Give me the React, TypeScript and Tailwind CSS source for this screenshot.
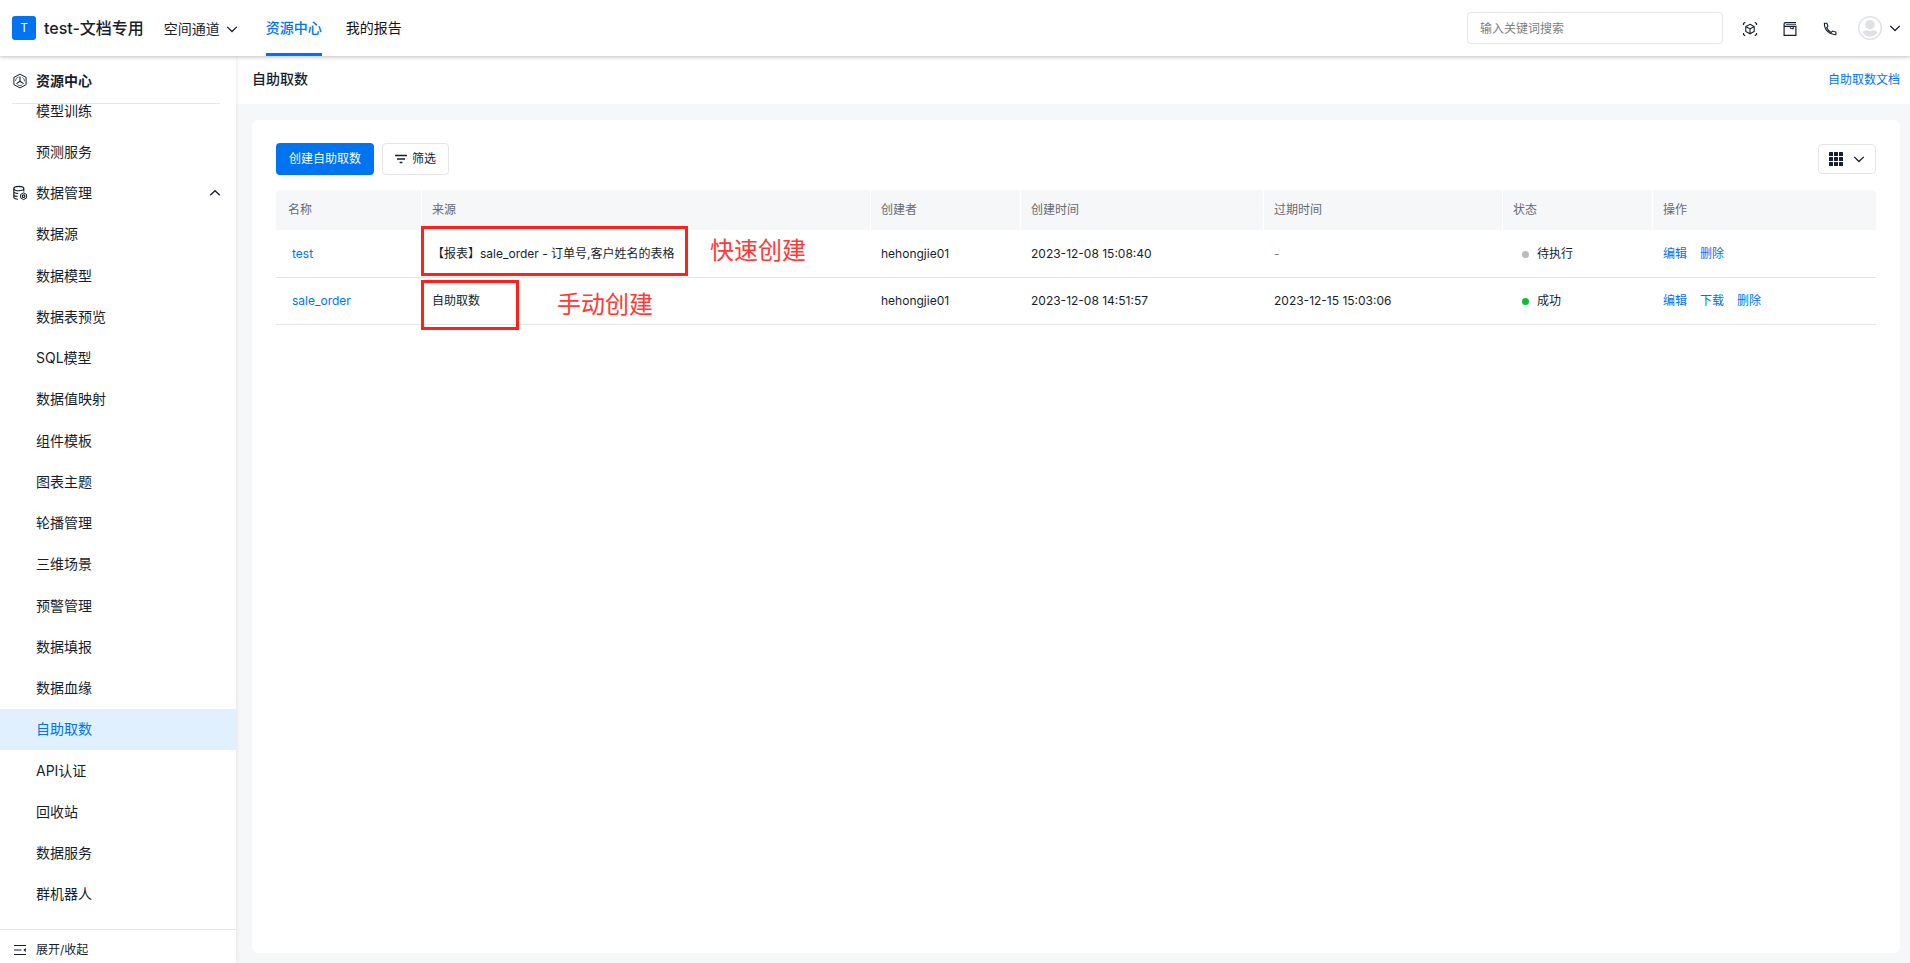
import type { ReactNode } from 'react'
import clsx from 'clsx'

interface MenuItem {
  label: string
  active?: boolean
  group?: boolean
}

interface TaskRow {
  name: string
  source: string
  creator: string
  createdAt: string
  expiresAt: string | null
  status: 'pending' | 'success'
  actions: string[]
}

const menuItems: MenuItem[] = [
  { label: '模型训练' },
  { label: '预测服务' },
  { label: '数据管理', group: true },
  { label: '数据源' },
  { label: '数据模型' },
  { label: '数据表预览' },
  { label: 'SQL模型' },
  { label: '数据值映射' },
  { label: '组件模板' },
  { label: '图表主题' },
  { label: '轮播管理' },
  { label: '三维场景' },
  { label: '预警管理' },
  { label: '数据填报' },
  { label: '数据血缘' },
  { label: '自助取数', active: true },
  { label: 'API认证' },
  { label: '回收站' },
  { label: '数据服务' },
  { label: '群机器人' },
]

const columns = [
  { title: '名称', className: 'w-[146px] pl-3 rounded-tl' },
  { title: '来源', className: 'w-[449px] pl-2.5' },
  { title: '创建者', className: 'w-[150px] pl-2.5' },
  { title: '创建时间', className: 'w-[243px] pl-2.5' },
  { title: '过期时间', className: 'w-[239px] pl-2.5' },
  { title: '状态', className: 'w-[150px] pl-2.5' },
  { title: '操作', className: 'pl-2.5 rounded-tr' },
]

const rows: TaskRow[] = [
  {
    name: 'test',
    source: '【报表】sale_order - 订单号,客户姓名的表格',
    creator: 'hehongjie01',
    createdAt: '2023-12-08 15:08:40',
    expiresAt: null,
    status: 'pending',
    actions: ['编辑', '删除'],
  },
  {
    name: 'sale_order',
    source: '自助取数',
    creator: 'hehongjie01',
    createdAt: '2023-12-08 14:51:57',
    expiresAt: '2023-12-15 15:03:06',
    status: 'success',
    actions: ['编辑', '下载', '删除'],
  },
]

function Icon({ size = 16, children }: { size?: number; children: ReactNode }) {
  return (
    <svg
      width={size}
      height={size}
      viewBox={`0 0 ${size} ${size}`}
      fill="none"
      stroke="currentColor"
      strokeWidth="1.2"
      className="shrink-0"
      aria-hidden="true"
    >
      {children}
    </svg>
  )
}

function Chevron({ up = false }: { up?: boolean }) {
  return (
    <Icon size={12}>
      <path d={up ? 'M1.2 8.3 6 3.7l4.8 4.6' : 'M1.2 3.9 6 8.5l4.8-4.6'} strokeWidth="1.3" />
    </Icon>
  )
}

function HexIcon() {
  return (
    <Icon>
      <path d="M8 1.1 14.1 4.400v7.200L8 14.900 1.900 11.600V4.400z" strokeWidth="1" />
      <circle cx="8" cy="8" r="4.500" strokeWidth="0.700" strokeDasharray="5.400 4.020" strokeDashoffset="-4.400" />
      <path d="M8 3.600v4.600M8 8.200l-3.600 2.400M8 8.200l3.600 2.400" strokeWidth="1.100" />
    </Icon>
  )
}

function DatabaseIcon() {
  return (
    <Icon>
      <ellipse cx="6.8" cy="3.6" rx="5" ry="2.2" strokeWidth="1.1" />
      <path d="M1.8 3.600v8.600c0 1 1.600 1.900 4.200 2.100M1.800 6.500c0 1 1.600 1.800 4.400 2M1.800 9.400c0 1 1.500 1.800 3.600 2M11.800 3.600v2.800" strokeWidth="1.100" />
      <path d="m11.600 7.800 3 1.700v3.400l-3 1.700-3-1.700V9.500z" strokeWidth="1" />
      <circle cx="11.600" cy="11.200" r="1.300" />
    </Icon>
  )
}

function ScanCubeIcon() {
  return (
    <Icon>
      <path d="M8 3.300 12.200 5.600v4.900L8 12.800 3.800 10.500V5.600zM3.800 5.600 8 7.900l4.200-2.300M8 7.900v4.900" strokeWidth="1.100" />
      <path d="M1.500 4V2.500L3.200 1.300M12.800 1.300l1.700 1.200V4M1.500 12v1.500l1.700 1.200M12.800 14.700l1.700-1.200V12" />
    </Icon>
  )
}

function ManualIcon() {
  return (
    <Icon>
      <path d="M14 1.600H3.600c-.9 0-1.500.5-1.500 1.300v11.500h11.800V5.300H3.600c-.9 0-1.500-.5-1.500-1.300" />
      <path d="M4 3.500h10" strokeWidth="0.700" />
      <path d="M8.400 5.300v2.200h3V5.300M10.900 6.500v2" strokeWidth="0.900" />
    </Icon>
  )
}

function PhoneIcon() {
  return (
    <Icon>
      <path d="M2.400 2.200h2.500l1 3.200-1.200 1.300c.9 2.100 2.500 3.700 4.600 4.700l1.400-1.300 3.200 1v2.600C7.800 14.100 2.200 9.100 2.400 2.200z" strokeWidth="1.100" />
    </Icon>
  )
}

function FilterIcon() {
  return (
    <Icon size={12}>
      <path d="M0 2.500h12M2 6h8M4.600 9.500h2.800" strokeWidth="1.300" />
    </Icon>
  )
}

function CollapseIcon() {
  return (
    <Icon size={12}>
      <path d="M0 1.500h12M0 6h7.500M0 10.500h12" />
      <path d="m11.800 4.100-2.500 1.900 2.500 1.900z" fill="currentColor" stroke="none" />
    </Icon>
  )
}

function GridIcon() {
  const cells = [0, 5, 10]
  return (
    <Icon size={14}>
      {cells.map((y) =>
        cells.map((x) => (
          <rect key={`${x}-${y}`} x={x} y={y} width="4" height="4" rx="0.5" fill="currentColor" stroke="none" />
        )),
      )}
    </Icon>
  )
}

function Avatar() {
  return (
    <svg width="24" height="24" viewBox="0 0 24 24" className="shrink-0" aria-hidden="true">
      <circle cx="12" cy="12" r="11.300" fill="#fff" stroke="#dfe1e5" strokeWidth="1.400" />
      <circle cx="12" cy="8.700" r="4.800" fill="#dfe1e5" />
      <path d="M4.500 16.200c1.200-1.300 3.100-1.900 4.700-1.900 1.700 1.100 3.900 1.100 5.600 0 1.600 0 3.500.6 4.700 1.900-1.400 2.700-4.200 4.500-7.500 4.500s-6.100-1.800-7.500-4.500z" fill="#dfe1e5" />
    </svg>
  )
}

function TopBar() {
  return (
    <header className="relative z-20 flex h-14 shrink-0 items-center bg-white pr-[9px] pl-3 shadow-[0_1px_4px_rgba(0,0,0,0.25)]">
      <span className="flex h-6 w-6 items-center justify-center rounded-[3px] bg-[#0073f0] text-xs text-white">T</span>
      <span className="ml-2 text-base font-medium">test-文档专用</span>
      <nav className="ml-5 flex h-full items-center text-sm">
        <button className="mr-7 flex items-center gap-1.5 pt-0.5">
          空间通道
          <Chevron />
        </button>
        <a href="#" className="mr-6 flex h-full items-center border-b-3 border-[#0073f0] pt-0.5 font-medium text-[#0073f0]">
          资源中心
        </a>
        <a href="#" className="flex h-full items-center text-[#111]">我的报告</a>
      </nav>
      <input
        type="search"
        aria-label="搜索"
        placeholder="输入关键词搜索"
        className="mr-[19px] ml-auto h-8 w-64 rounded border border-[#e5e6e8] px-3 text-xs placeholder-[#7c7e82] outline-none"
      />
      <div className="flex items-center gap-6 pt-0.5">
        <button aria-label="三维"><ScanCubeIcon /></button>
        <button aria-label="文档"><ManualIcon /></button>
        <button aria-label="电话"><PhoneIcon /></button>
      </div>
      <button aria-label="用户" className="ml-5 flex items-center gap-[7px]">
        <Avatar />
        <Chevron />
      </button>
    </header>
  )
}

function Sidebar() {
  return (
    <aside className="relative z-10 flex w-[236px] shrink-0 flex-col bg-white shadow-[0_0_5px_rgba(0,0,0,0.1)]">
      <div className="mr-4 ml-3 flex h-12 shrink-0 items-center gap-2 border-b border-[#e5e6e8] pt-0.5 text-sm font-semibold">
        <HexIcon />
        资源中心
      </div>
      {/* The list is scrolled a little, so its first entry sits close under the title */}
      <nav className="flex min-h-0 flex-1 flex-col overflow-hidden pb-3.5 text-sm leading-none">
        <ul className="-mt-3.5 flex flex-1 flex-col">
          {menuItems.map((item) => (
            <li key={item.label} className="flex-1">
              <a
                href="#"
                className={clsx(
                  'flex h-full items-center gap-2 pr-[15px] pl-3',
                  item.active && 'bg-[#e1f0ff] text-[#0073f0]',
                )}
              >
                {item.group ? <DatabaseIcon /> : <span className="w-4" />}
                {item.label}
                {item.group && (
                  <span className="ml-auto">
                    <Chevron up />
                  </span>
                )}
              </a>
            </li>
          ))}
        </ul>
      </nav>
      <button className="flex shrink-0 items-center gap-2.5 border-t border-[#e5e6e8] pt-3 pb-[5px] pl-3.5 text-xs">
        <CollapseIcon />
        展开/收起
      </button>
    </aside>
  )
}

function Status({ status }: { status: TaskRow['status'] }) {
  return (
    <span className="flex items-center gap-2 pl-[9px]">
      <span className={clsx('h-[7px] w-[7px] rounded-full', status === 'success' ? 'bg-[#0bbd35]' : 'bg-[#b9bbbf]')} />
      {status === 'success' ? '成功' : '待执行'}
    </span>
  )
}

function TaskTable() {
  return (
    <table className="w-full table-fixed border-separate border-spacing-0 text-left text-xs">
      <thead>
        <tr className="h-[41px] text-[#666a73]">
          {columns.map((col) => (
            <th
              key={col.title}
              className={clsx(
                'border-r border-b border-white bg-[#f6f7f9] bg-clip-padding p-0 font-normal last:border-r-0',
                col.className,
              )}
            >
              {col.title}
            </th>
          ))}
        </tr>
      </thead>
      <tbody>
        {rows.map((row) => (
          <tr key={row.name} className="h-[47px] *:border-b *:border-[#e5e6e8] *:pl-2.5">
            <td>
              <a href="#" className="ml-1.5 text-[#0073f0]">{row.name}</a>
            </td>
            <td>{row.source}</td>
            <td>{row.creator}</td>
            <td>{row.createdAt}</td>
            <td>{row.expiresAt ?? <span className="text-[#7c7e82]">-</span>}</td>
            <td>
              <Status status={row.status} />
            </td>
            <td>
              <span className="flex gap-[13px] text-[#0073f0]">
                {row.actions.map((action) => (
                  <a key={action} href="#">{action}</a>
                ))}
              </span>
            </td>
          </tr>
        ))}
      </tbody>
    </table>
  )
}

export default function App() {
  return (
    <div className="flex h-screen flex-col overflow-hidden bg-[#f6f7f9] font-['Inter','Noto_Sans_CJK_SC',sans-serif] text-[#171e2b]">
      <TopBar />
      <div className="flex min-h-0 flex-1">
        <Sidebar />
        <main className="flex min-w-0 flex-1 flex-col">
          <div className="flex h-12 shrink-0 items-center justify-between bg-white pr-2.5 pl-4">
            <h1 className="pb-0.5 text-sm font-medium">自助取数</h1>
            <a href="#" className="text-xs text-[#0073f0]">自助取数文档</a>
          </div>
          <section className="mt-4 mr-2.5 mb-2.5 ml-4 flex-1 rounded-md bg-white px-6 pt-[23px]">
            <div className="flex items-center gap-2 text-xs">
              <button className="h-8 rounded bg-[#0073f0] px-[13px] text-white">创建自助取数</button>
              <button className="flex h-8 items-center gap-[5px] rounded border border-[#e5e6e8] px-3">
                <FilterIcon />
                筛选
              </button>
              <button
                aria-label="视图"
                className="ml-auto flex h-[30px] items-center gap-2.5 rounded border border-[#e5e6e8] px-2.5"
              >
                <GridIcon />
                <Chevron />
              </button>
            </div>
            <div className="relative mt-[15px]">
              <TaskTable />
              {/* Annotations over the source column */}
              <div className="absolute top-9 left-[145px] h-[50px] w-[267px] border-3 border-[#ff201a]" />
              <p className="absolute top-[43px] left-[434px] text-2xl leading-9 text-[#ff3a37]">快速创建</p>
              <div className="absolute top-[90px] left-[145px] h-[50px] w-[98px] border-3 border-[#ff201a]" />
              <p className="absolute top-[97px] left-[281px] text-2xl leading-9 text-[#ff3a37]">手动创建</p>
            </div>
          </section>
        </main>
      </div>
    </div>
  )
}
